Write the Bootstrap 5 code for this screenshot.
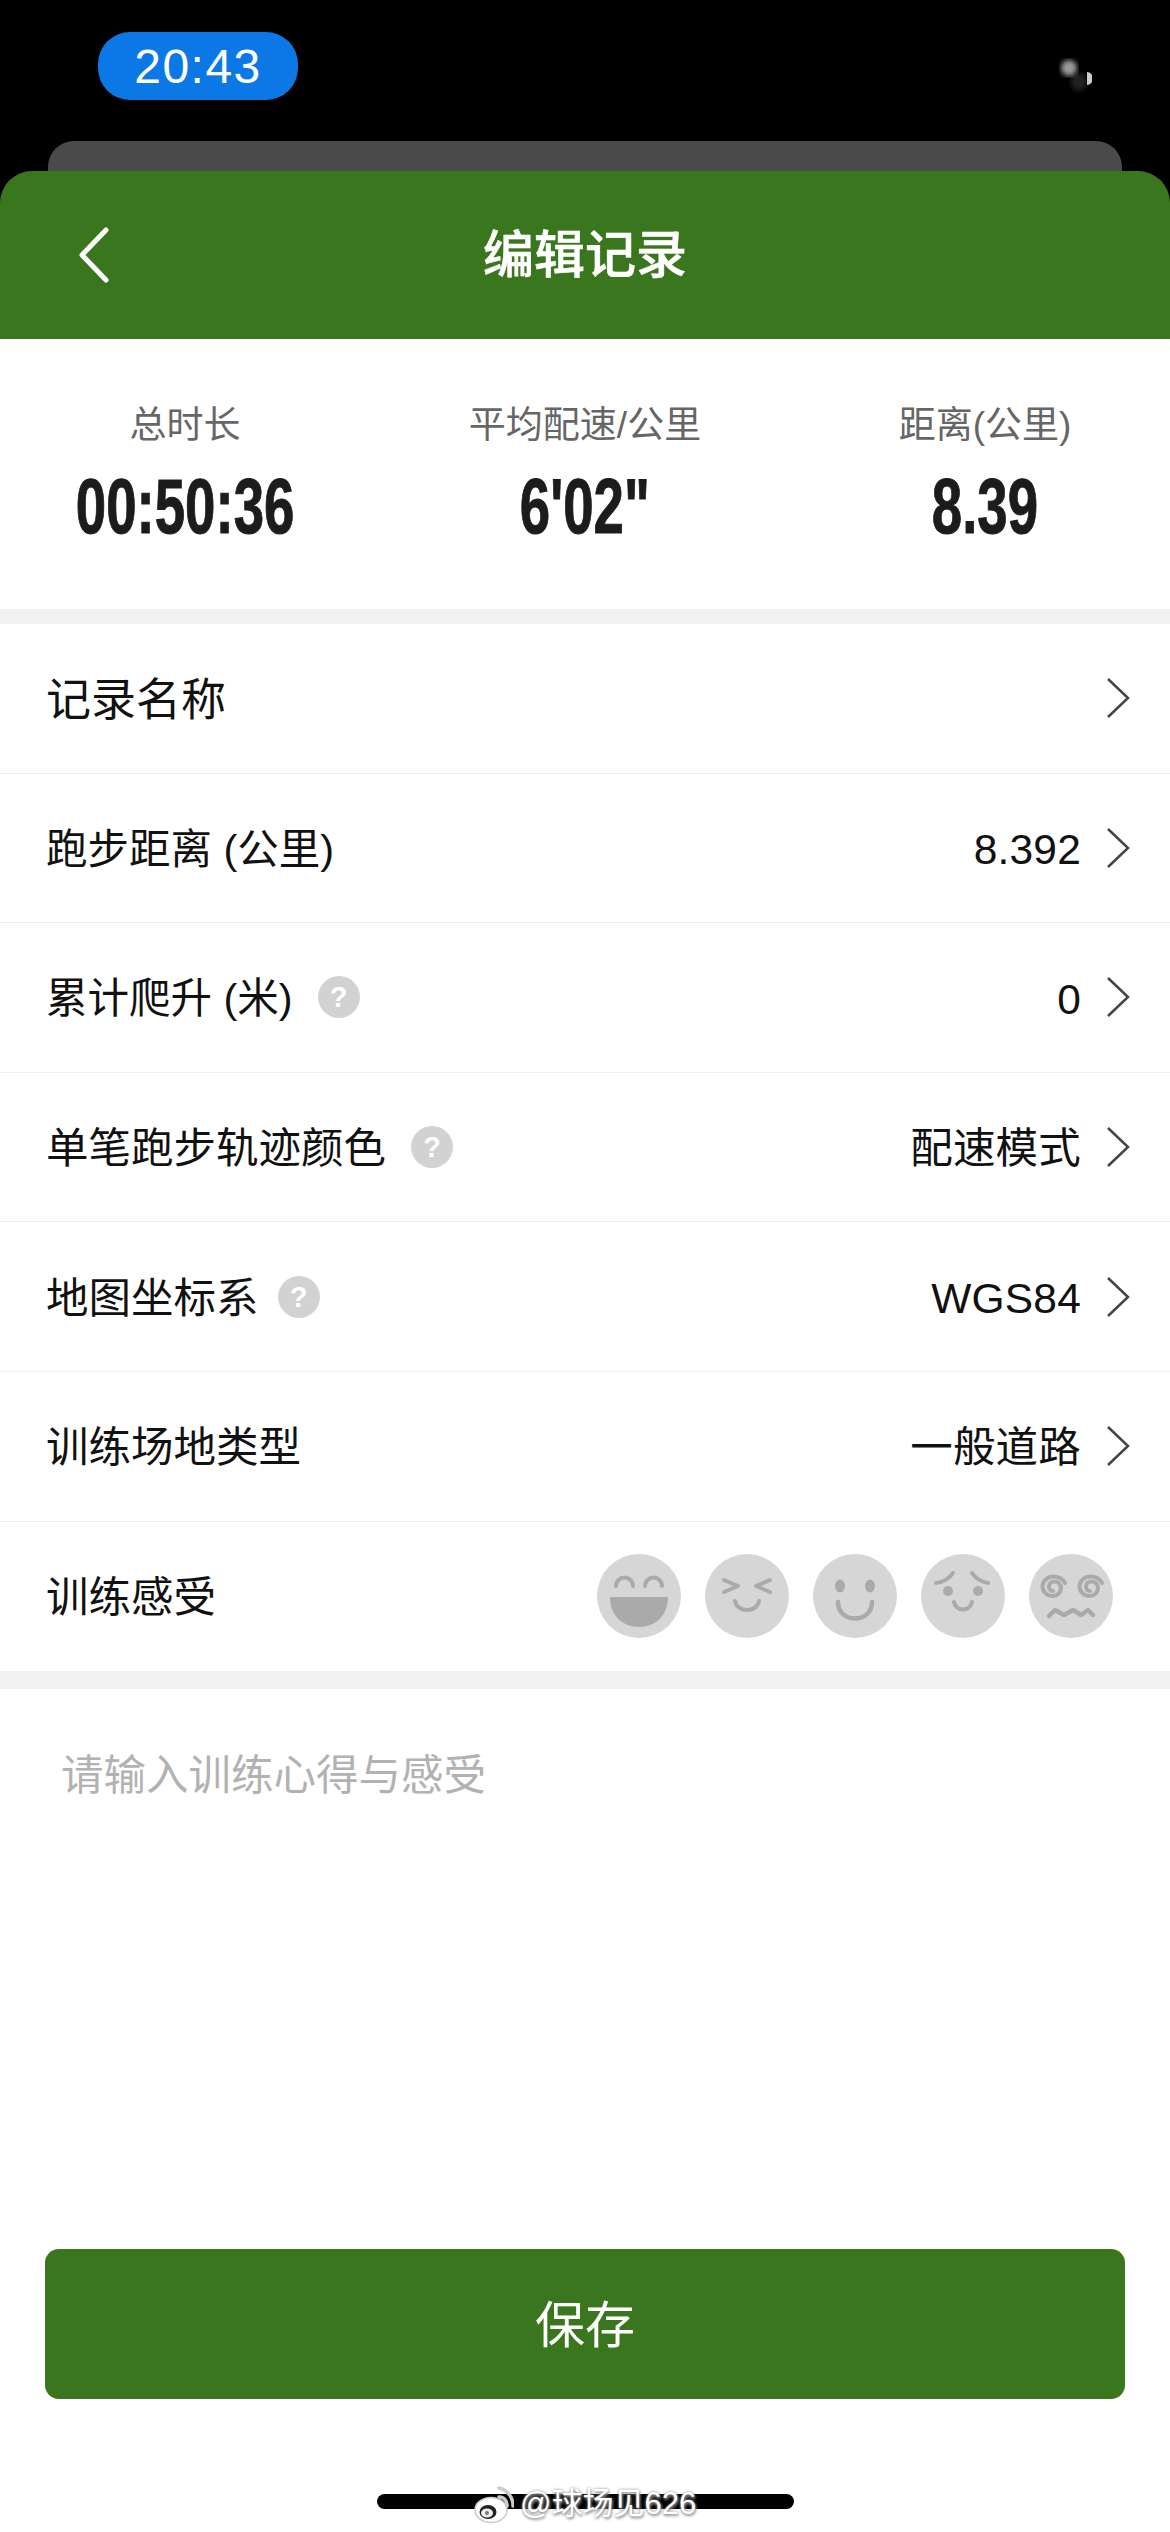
<!DOCTYPE html>
<html lang="zh-CN">
<head>
  <meta charset="UTF-8" />
  <meta name="viewport" content="width=device-width, initial-scale=1.0" />
  <link rel="stylesheet" href="https://cdn.jsdelivr.net/npm/bootstrap@5.3.2/dist/css/bootstrap.min.css">
  <title>编辑记录</title>
  <style>
    body {
      background: #000;
      font-family: "Liberation Sans", "Noto Sans CJK SC", sans-serif;
      width: 1170px;
      color: #111;
    }
    .phone { position: relative; width: 1170px; height: 2532px; overflow: hidden; }

    /* status bar */
    .status-area { height: 141px; padding: 32px 78px 0 98px; }
    .time-pill {
      width: 200px; height: 68px; border-radius: 32px;
      background: #0b78e6; color: #fff;
      font-size: 48px; letter-spacing: 1.5px; line-height: 70px; text-align: center;
    }
    .blob-icon { width: 60px; height: 60px; margin-top: 18px; }
    .behind-card { height: 30px; margin: 0 48px; background: #4a4a4a; border-radius: 26px 26px 0 0; }

    /* header */
    .sheet-head {
      height: 168px; padding: 0; background: #3a761e; color: #fff;
      border-radius: 32px 32px 0 0; position: relative; justify-content: center;
    }
    .back-btn { position: absolute; left: 76px; top: 56px; width: 36px; height: 56px; }
    .sheet-title { font-size: 51px; font-weight: 500; line-height: 1; margin: 0; -webkit-text-stroke: .6px #fff; }

    .sheet-body { background: #fff; height: 2193px; display: flex; flex-direction: column; }

    /* stats */
    .stats-grid {
      height: 270px; display: grid; grid-template-columns: repeat(3, 400px);
      justify-content: center; padding-top: 65px; text-align: center;
    }
    .stat-label { font-size: 37px; line-height: 44px; color: #666; }
    .stat-num {
      display: inline-block; margin-top: 16px;
      font-size: 78px; line-height: 84px; font-weight: 700; color: #1c1c1c;
      transform: scaleX(.7); -webkit-text-stroke: 1px #1c1c1c;
    }

    .gap-band { background: #f2f2f2; flex: none; }
    .band-top { height: 15px; }
    .band-mid { height: 18px; }

    /* rows */
    .set-row {
      height: 149.6px; padding: 0 40px 0 46px;
      border-color: #eee; border-width: 0 0 3px;
      font-size: 42.5px; color: #111; background: transparent;
    }
    .set-row:last-child { border-bottom: 0; }
    .set-name { padding-top: 4px; }
    .set-name-big { font-size: 45px; }
    .set-name-unit { font-size: 41.5px; }
    .set-val { font-size: 42.5px; padding-top: 4px; margin-right: 25px; letter-spacing: .2px; }
    .chev { width: 24px; height: 44px; flex: none; }
    .help-dot {
      width: 42px; height: 42px; border-radius: 50%; flex: none;
      background: #d2d2d2; color: #fff; margin-left: 25px;
      font-size: 29px; font-weight: 700; line-height: 42px; text-align: center;
    }
    .help-near { margin-left: 19px; }
    .face { width: 84px; height: 84px; flex: none; }
    .faces { gap: 24px; margin-right: 17px; }

    /* notes */
    .note-input {
      height: 560px; flex: none; border: 0; border-radius: 0; resize: none;
      padding: 58px 61px 0; font-size: 42.5px; line-height: 58px; box-shadow: none;
      font-family: inherit;
    }
    .note-input::placeholder { color: #b2b2b2; opacity: 1; }

    .save-btn {
      display: block; width: 1080px; height: 150px; margin: 0 45px;
      background: #3a761e; border: 0; border-radius: 14px;
      color: #fff; font-size: 50px; padding: 5px 0 0;
    }
    .home-bar { width: 417px; height: 15px; border-radius: 8px; background: #000; margin: 95px 0 0 377px; }

    /* weibo watermark sits over the home bar */
    .wm {
      position: absolute; left: 472px; top: 2483px;
      display: flex; align-items: center; gap: 6px;
      color: #fff; font-size: 31px; line-height: 42px;
      text-shadow: 0 0 3px #888, 1px 2px 3px #999;
    }
    .wm-logo { width: 42px; height: 40px; }
  </style>
</head>
<body>
  <div class="phone">
    <div class="status-area d-flex justify-content-between align-items-start">
      <div class="time-pill">20:43</div>
      <svg class="blob-icon" viewBox="0 0 60 60" aria-hidden="true">
        <defs><filter id="soft"><feGaussianBlur stdDeviation="2.500" /></filter></defs>
        <ellipse cx="47" cy="32" rx="8" ry="9" fill="#222" filter="url(#soft)" />
        <circle cx="37" cy="18" r="8" fill="#999" filter="url(#soft)" />
        <path d="M55 22a6 6.500 0 0 1 0 13z" fill="#ccc" />
      </svg>
    </div>
    <div class="behind-card"></div>

    <nav class="navbar sheet-head">
      <svg class="back-btn" viewBox="0 0 36 56" aria-hidden="true">
        <path d="M30 3 L6 28 L30 53" fill="none" stroke="#fff" stroke-width="5" stroke-linecap="round" stroke-linejoin="round" />
      </svg>
      <h1 class="sheet-title">编辑记录</h1>
    </nav>

    <div class="sheet-body">
      <div class="stats-grid">
        <div>
          <div class="stat-label">总时长</div>
          <div class="stat-num">00:50:36</div>
        </div>
        <div>
          <div class="stat-label">平均配速/公里</div>
          <div class="stat-num">6'02"</div>
        </div>
        <div>
          <div class="stat-label">距离(公里)</div>
          <div class="stat-num">8.39</div>
        </div>
      </div>
      <div class="gap-band band-top"></div>

      <ul class="list-group list-group-flush">
        <li class="list-group-item set-row d-flex align-items-center">
          <span class="set-name set-name-big">记录名称</span>
          <svg class="chev ms-auto" viewBox="0 0 24 44"><path d="M2 3 L22 22 L2 41" fill="none" stroke="#444" stroke-width="2.500" /></svg>
        </li>
        <li class="list-group-item set-row d-flex align-items-center">
          <span class="set-name set-name-unit">跑步距离 (公里)</span>
          <span class="set-val ms-auto">8.392</span>
          <svg class="chev" viewBox="0 0 24 44"><path d="M2 3 L22 22 L2 41" fill="none" stroke="#444" stroke-width="2.500" /></svg>
        </li>
        <li class="list-group-item set-row d-flex align-items-center">
          <span class="set-name set-name-unit">累计爬升 (米)</span>
          <span class="help-dot">?</span>
          <span class="set-val ms-auto">0</span>
          <svg class="chev" viewBox="0 0 24 44"><path d="M2 3 L22 22 L2 41" fill="none" stroke="#444" stroke-width="2.500" /></svg>
        </li>
        <li class="list-group-item set-row d-flex align-items-center">
          <span class="set-name">单笔跑步轨迹颜色</span>
          <span class="help-dot">?</span>
          <span class="set-val ms-auto">配速模式</span>
          <svg class="chev" viewBox="0 0 24 44"><path d="M2 3 L22 22 L2 41" fill="none" stroke="#444" stroke-width="2.500" /></svg>
        </li>
        <li class="list-group-item set-row d-flex align-items-center">
          <span class="set-name">地图坐标系</span>
          <span class="help-dot help-near">?</span>
          <span class="set-val ms-auto">WGS84</span>
          <svg class="chev" viewBox="0 0 24 44"><path d="M2 3 L22 22 L2 41" fill="none" stroke="#444" stroke-width="2.500" /></svg>
        </li>
        <li class="list-group-item set-row d-flex align-items-center">
          <span class="set-name">训练场地类型</span>
          <span class="set-val ms-auto">一般道路</span>
          <svg class="chev" viewBox="0 0 24 44"><path d="M2 3 L22 22 L2 41" fill="none" stroke="#444" stroke-width="2.500" /></svg>
        </li>
        <li class="list-group-item set-row d-flex align-items-center">
          <span class="set-name">训练感受</span>
          <div class="faces d-flex ms-auto">
            <svg class="face" viewBox="0 0 84 84">
              <circle cx="42" cy="42" r="42" fill="#d6d6d6" />
              <path d="M19 32a8.500 8.500 0 0 1 17 0M48 32a8.500 8.500 0 0 1 17 0" fill="none" stroke="#aaa" stroke-width="4" stroke-linecap="round" />
              <path d="M13 43H71C71 62 58 73 42 73C26 73 13 62 13 43Z" fill="#aaa" />
            </svg>
            <svg class="face" viewBox="0 0 84 84">
              <circle cx="42" cy="42" r="42" fill="#d6d6d6" />
              <path d="M19 26L33 32L19 38M65 26L51 32L65 38M30 47C32 59 52 59 54 47" fill="none" stroke="#aaa" stroke-width="4" stroke-linecap="round" stroke-linejoin="round" />
            </svg>
            <svg class="face" viewBox="0 0 84 84">
              <circle cx="42" cy="42" r="42" fill="#d6d6d6" />
              <ellipse cx="27" cy="32" rx="5" ry="6.500" fill="#aaa" />
              <ellipse cx="57" cy="32" rx="5" ry="6.500" fill="#aaa" />
              <path d="M25 48C25 70 59 70 59 48" fill="none" stroke="#aaa" stroke-width="4.500" stroke-linecap="round" />
            </svg>
            <svg class="face" viewBox="0 0 84 84">
              <circle cx="42" cy="42" r="42" fill="#d6d6d6" />
              <circle cx="27" cy="37" r="5" fill="#aaa" />
              <circle cx="57" cy="37" r="5" fill="#aaa" />
              <path d="M32 19C28 25 22 28 15 29M51 19C55 25 61 28 67 29M33 48C35 58 49 58 51 48" fill="none" stroke="#aaa" stroke-width="4" stroke-linecap="round" />
            </svg>
            <svg class="face" viewBox="0 0 84 84">
              <circle cx="42" cy="42" r="42" fill="#d6d6d6" />
              <path d="M36 29C33 24 29 22.500 24.500 22.500A11 10 0 0 0 13.500 32.500A10.500 9.500 0 0 0 24 42A8 8 0 0 0 32 34A6.500 6.500 0 0 0 25 27.500A5 5 0 0 0 20 33A4 4 0 0 0 24 37" fill="none" stroke="#aaa" stroke-width="4" stroke-linecap="round" />
              <path d="M36 29C33 24 29 22.500 24.500 22.500A11 10 0 0 0 13.500 32.500A10.500 9.500 0 0 0 24 42A8 8 0 0 0 32 34A6.500 6.500 0 0 0 25 27.500A5 5 0 0 0 20 33A4 4 0 0 0 24 37" transform="translate(37 0)" fill="none" stroke="#aaa" stroke-width="4" stroke-linecap="round" />
              <path d="M20 62L26 56L35 61L44 56L52 61L59 56L64 61" fill="none" stroke="#aaa" stroke-width="4.500" stroke-linecap="round" stroke-linejoin="round" />
            </svg>
          </div>
        </li>
      </ul>
      <div class="gap-band band-mid"></div>

      <textarea class="form-control note-input" placeholder="请输入训练心得与感受"></textarea>

      <button type="button" class="btn save-btn">保存</button>
      <div class="home-bar"></div>
    </div>

    <div class="wm">
      <svg class="wm-logo" viewBox="0 0 42 40" aria-hidden="true">
        <ellipse cx="19" cy="26" rx="16" ry="12.500" fill="#fff" stroke="#ccc" stroke-width="1.500" />
        <ellipse cx="16" cy="28" rx="8.500" ry="7" fill="#222" />
        <ellipse cx="15" cy="29" rx="6" ry="4.500" fill="#eee" />
        <circle cx="15" cy="29" r="2" fill="#777" />
        <path d="M27 13a8 8 0 0 1 8 9M27 4a18 18 0 0 1 14 18" fill="none" stroke="#ccc" stroke-width="3.500" stroke-linecap="round" />
      </svg>
      <span>@球场见626</span>
    </div>
  </div>

  <script src="https://cdn.jsdelivr.net/npm/bootstrap@5.3.2/dist/js/bootstrap.bundle.min.js"></script>
</body>
</html>
